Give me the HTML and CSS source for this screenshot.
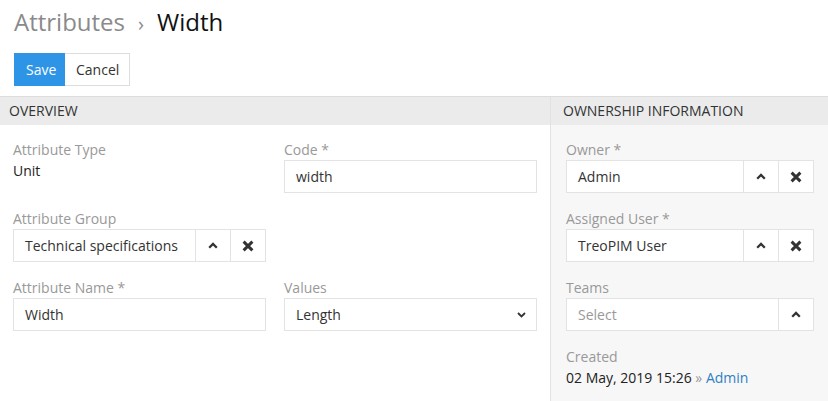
FILE: index.html
```html
<!DOCTYPE html>
<html>
<head>
<meta charset="utf-8">
<link rel="stylesheet" href="styles.css">
</head>
<body>
<div class="page-header">
  <h1 class="title"><span class="crumb">Attributes</span><span class="sep">›</span><span class="current">Width</span></h1>
  <div class="actions">
    <button class="btn btn-primary">Save</button><button class="btn btn-default">Cancel</button>
  </div>
</div>
<div class="panels">
  <div class="panel panel-main">
    <div class="panel-heading">OVERVIEW</div>
    <div class="panel-body grid">
      <div class="field">
        <div class="label">Attribute Type</div>
        <div class="value">Unit</div>
      </div>
      <div class="field">
        <div class="label">Code *</div>
        <div class="input">width</div>
      </div>
      <div class="field">
        <div class="label">Attribute Group</div>
        <div class="input-group">
          <div class="input grow">Technical specifications</div>
          <div class="ig-btn"><svg width="10" height="7" viewBox="0 0 10 7"><path d="M1.2 5.8 L5 2 L8.8 5.8" fill="none" stroke="#333" stroke-width="2.3"/></svg></div>
          <div class="ig-btn"><svg width="12" height="12" viewBox="0 0 12 12"><path d="M1.6 1.6 L10.4 10.4 M10.4 1.6 L1.6 10.4" fill="none" stroke="#333" stroke-width="2.9"/></svg></div>
        </div>
      </div>
      <div class="field"></div>
      <div class="field">
        <div class="label">Attribute Name *</div>
        <div class="input">Width</div>
      </div>
      <div class="field">
        <div class="label">Values</div>
        <div class="input select">Length<svg width="9" height="6" viewBox="0 0 9 6"><path d="M1 1 L4.5 4.5 L8 1" fill="none" stroke="#333" stroke-width="1.8"/></svg></div>
      </div>
    </div>
  </div>
  <div class="panel panel-side">
    <div class="panel-heading">OWNERSHIP INFORMATION</div>
    <div class="panel-body">
      <div class="field">
        <div class="label">Owner *</div>
        <div class="input-group">
          <div class="input grow">Admin</div>
          <div class="ig-btn"><svg width="10" height="7" viewBox="0 0 10 7"><path d="M1.2 5.8 L5 2 L8.8 5.8" fill="none" stroke="#333" stroke-width="2.3"/></svg></div>
          <div class="ig-btn"><svg width="12" height="12" viewBox="0 0 12 12"><path d="M1.6 1.6 L10.4 10.4 M10.4 1.6 L1.6 10.4" fill="none" stroke="#333" stroke-width="2.9"/></svg></div>
        </div>
      </div>
      <div class="field">
        <div class="label">Assigned User *</div>
        <div class="input-group">
          <div class="input grow">TreoPIM User</div>
          <div class="ig-btn"><svg width="10" height="7" viewBox="0 0 10 7"><path d="M1.2 5.8 L5 2 L8.8 5.8" fill="none" stroke="#333" stroke-width="2.3"/></svg></div>
          <div class="ig-btn"><svg width="12" height="12" viewBox="0 0 12 12"><path d="M1.6 1.6 L10.4 10.4 M10.4 1.6 L1.6 10.4" fill="none" stroke="#333" stroke-width="2.9"/></svg></div>
        </div>
      </div>
      <div class="field">
        <div class="label">Teams</div>
        <div class="input-group">
          <div class="input grow placeholder">Select</div>
          <div class="ig-btn"><svg width="10" height="7" viewBox="0 0 10 7"><path d="M1.2 5.8 L5 2 L8.8 5.8" fill="none" stroke="#333" stroke-width="2.3"/></svg></div>
        </div>
      </div>
      <div class="field">
        <div class="label">Created</div>
        <div class="value">02 May, 2019 15:26 <span class="raquo">»</span> <a class="link">Admin</a></div>
      </div>
    </div>
  </div>
</div>
</body>
</html>
```
FILE: styles.css
```css
* { box-sizing: border-box; }
html, body { margin: 0; padding: 0; }
body {
  font-family: "Open Sans", "DejaVu Sans", sans-serif;
  font-size: 14px;
  color: #333;
  background: #fff;
  width: 828px;
  height: 401px;
  overflow: hidden;
}
.page-header { padding: 6px 14px 10px; }
.title {
  margin: 0;
  font-size: 24px;
  font-weight: 400;
  line-height: 32px;
  height: 32px;
}
.crumb { color: #8a8a8a; }
.sep { color: #8a8a8a; margin: 0 13px 0 13px; font-size: 20px; }
.current { color: #111; }
.actions { display: flex; margin-top: 15px; }
.btn {
  font-family: inherit;
  font-size: 14px;
  height: 33px;
  padding: 0 11px;
  border: 1px solid #ddd;
  background: #fff;
  color: #333;
  margin: 0;
}
.btn-primary { background: #2e95e6; border-color: #2e95e6; color: #fff; width: 51px; }
.btn-default { width: 65px; border-left: none; }
.panels { display: flex; border-top: 1px solid #ddd; height: 305px; }
.panel-main { width: 550px; }
.panel-side { flex: 1; background: #f7f7f7; border-left: 1px solid #e2e2e2; }
.panel-heading {
  background: #ebebeb;
  height: 28px;
  line-height: 28px;
  font-size: 14px;
  color: #333;
  padding-left: 9px;
}
.panel-side .panel-heading { padding-left: 12px; }
.panel-body { padding: 14px 13px 0 13px; }
.panel-side .panel-body { padding: 14px 14px 0 15px; }
.grid { display: grid; grid-template-columns: 253px 253px; column-gap: 18px; }
.field { height: 69px; }
.label { color: #999; line-height: 21px; height: 21px; }
.value { line-height: 21px; color: #222; }
.input {
  height: 33px;
  border: 1px solid #e3e3e3;
  background: #fff;
  line-height: 31px;
  padding-left: 11px;
  color: #333;
}
.input-group { display: flex; }
.grow { flex: 1; }
.ig-btn {
  width: 35px;
  height: 33px;
  border: 1px solid #e3e3e3;
  border-left: none;
  background: #fff;
  display: flex;
  align-items: center;
  justify-content: center;
}
.input-group .input { border-right: 1px solid #e3e3e3; }
.placeholder { color: #999; }
.select { display: flex; justify-content: space-between; align-items: center; padding-right: 10px; line-height: normal; }
.raquo { color: #999; }
.link { color: #2f7fc4; text-decoration: none; }
```
